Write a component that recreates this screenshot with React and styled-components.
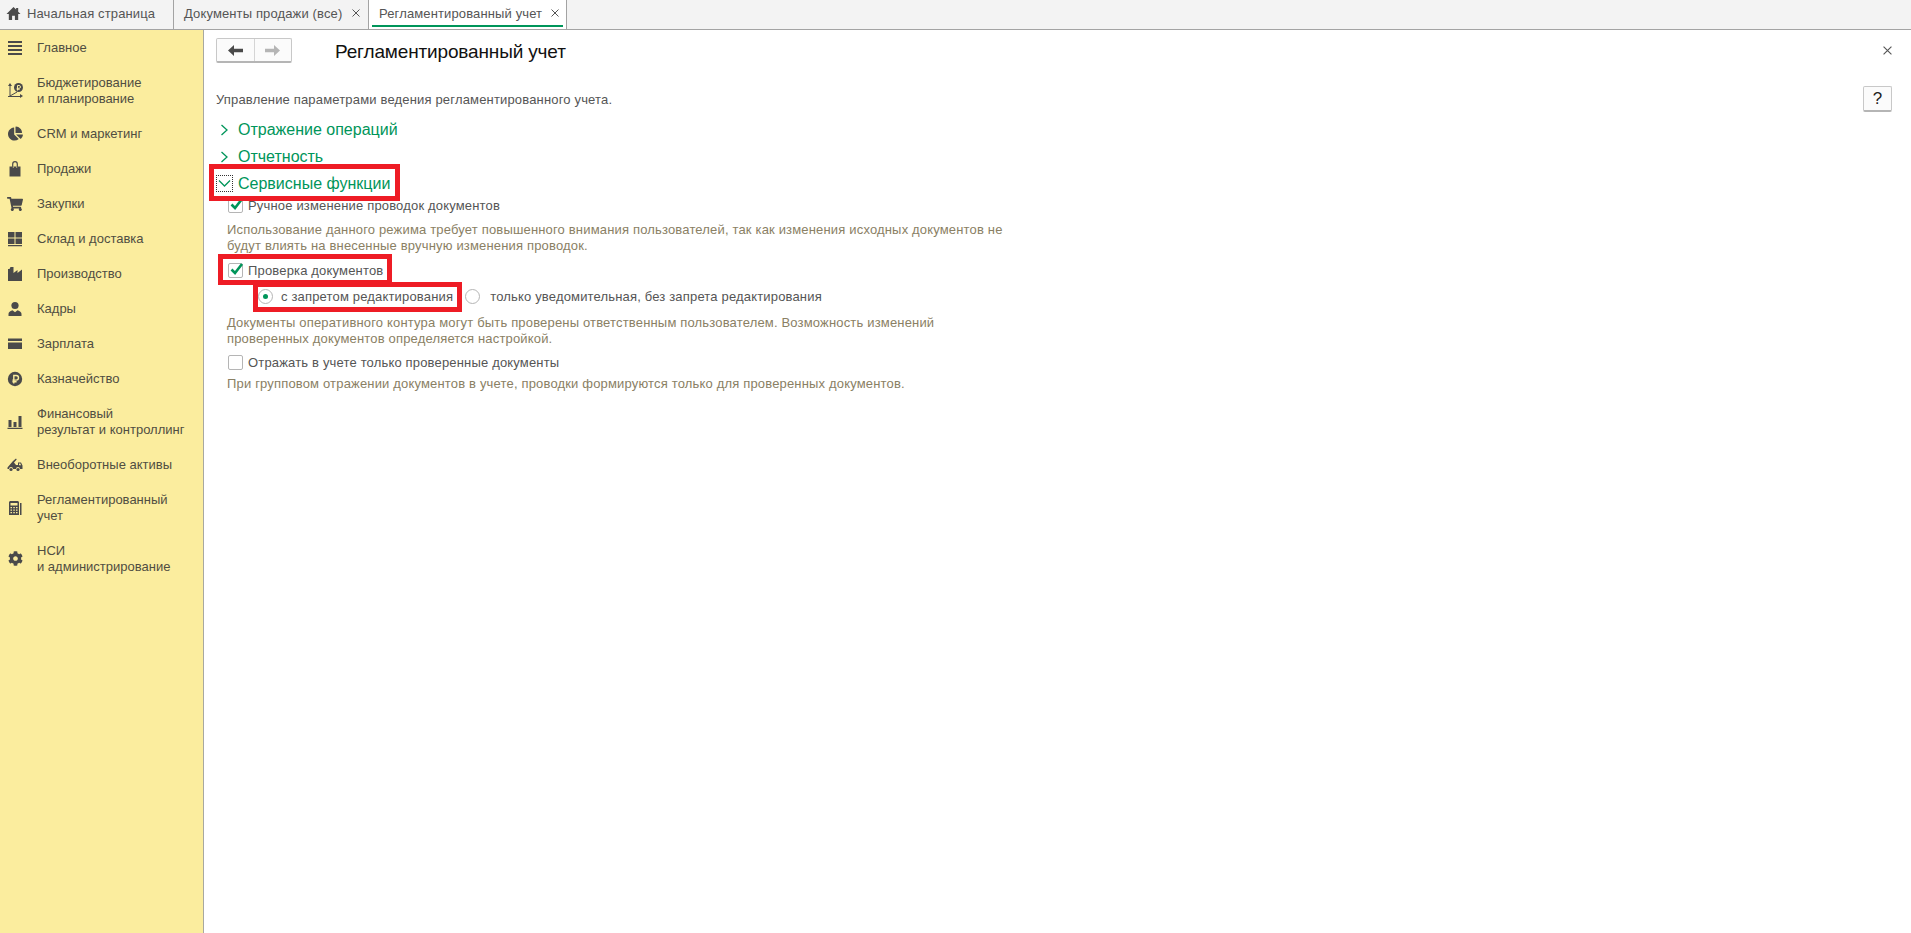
import React from "react";
import styled, { createGlobalStyle } from "styled-components";
import { FaChartPie, FaShoppingCart, FaCog } from "react-icons/fa";

const GlobalStyle = createGlobalStyle`
  html, body {
    margin: 0;
    padding: 0;
    background: #fff;
    font-family: "Liberation Sans", Arial, sans-serif;
    font-size: 13px;
    color: #555;
  }
  * { box-sizing: border-box; }
`;

const Page = styled.div`
  position: relative;
  width: 1911px;
  height: 933px;
  display: flex;
  flex-direction: column;
  overflow: hidden;
`;

const TabBar = styled.div`
  height: 30px;
  flex: none;
  display: flex;
  background: #f3f3f3;
  border-bottom: 1px solid #a3a3a3;
  letter-spacing: 0.13px;
`;

const HomeTab = styled.div`
  width: 174px;
  display: flex;
  align-items: center;
  padding: 0 0 3px 6px;
  gap: 6px;
  border-right: 1px solid #a3a3a3;
  svg { color: #4a4a4a; }
`;

const Tab = styled.div`
  position: relative;
  width: ${(p) => p.$width}px;
  display: flex;
  align-items: center;
  justify-content: space-between;
  padding: 0 ${(p) => (p.$active ? 7 : 8)}px 3px 10px;
  background: ${(p) => (p.$active ? "#fff" : "transparent")};
  border-right: 1px solid #a3a3a3;
  &::after {
    content: "";
    display: ${(p) => (p.$active ? "block" : "none")};
    position: absolute;
    left: 3px;
    right: 3px;
    bottom: 2px;
    height: 2px;
    background: #00955a;
  }
`;

const Body = styled.div`
  flex: 1;
  display: flex;
  min-height: 0;
`;

const Sidebar = styled.nav`
  width: 204px;
  flex: none;
  background: #fbed9e;
  border-right: 1px solid #a8a8a0;
`;

const NavItem = styled.div`
  height: ${(p) => (p.$double ? 51 : 35)}px;
  display: flex;
  align-items: center;
  color: #504e42;
  line-height: 16px;
`;

const NavIcon = styled.span`
  width: 37px;
  flex: none;
  display: flex;
  justify-content: center;
  padding-right: 7px;
  color: #4a4a4a;
`;

const NavText = styled.div`
  padding-top: 1px;
`;

const Main = styled.main`
  flex: 1;
  padding: 8px 19px 0 12px;
  letter-spacing: 0.17px;
`;

const Header = styled.div`
  height: 25px;
  display: flex;
  align-items: center;
`;

const NavGroup = styled.div`
  width: 76px;
  height: 25px;
  display: flex;
  border: 1px solid #c8c8c8;
  border-bottom: 2px solid #b5b5b5;
  border-radius: 2px;
  background: #fbfbfb;
`;

const NavButton = styled.div`
  flex: 1;
  display: flex;
  align-items: center;
  justify-content: center;
  & + & { border-left: 1px solid #d5d5d5; }
`;

const Title = styled.h1`
  margin: 2px 0 0 43px;
  font-size: 19px;
  font-weight: normal;
  letter-spacing: -0.15px;
  color: #111;
`;

const CloseMain = styled.div`
  margin-left: auto;
  display: flex;
`;

const IntroRow = styled.div`
  margin-top: 23px;
  height: 26px;
  display: flex;
  align-items: center;
  justify-content: space-between;
`;

const HelpButton = styled.div`
  width: 29px;
  height: 26px;
  display: flex;
  align-items: center;
  justify-content: center;
  border: 1px solid #c8c8c8;
  border-bottom: 2px solid #b5b5b5;
  border-radius: 2px;
  background: #fbfbfb;
  color: #222;
  font-size: 17px;
`;

const Groups = styled.div`
  margin-top: 4px;
  letter-spacing: 0;
`;

const GroupHead = styled.div`
  height: 27px;
  display: flex;
  align-items: center;
  font-size: 16px;
  color: #00955a;
`;

const Chevron = styled.span`
  width: 17px;
  height: 17px;
  margin-right: 5px;
  display: flex;
  align-items: center;
  justify-content: center;
  border: ${(p) => (p.$focus ? "1px dotted #333" : "none")};
`;

const CheckRow = styled.div`
  height: 18px;
  margin: ${(p) => p.$mt}px 0 0 12px;
  display: flex;
  align-items: center;
  gap: 5px;
`;

const CheckBox = styled.span`
  position: relative;
  width: 15px;
  height: 15px;
  flex: none;
  border: 1px solid #b5b5b5;
  border-radius: 2px;
  background: #fff;
  svg {
    position: absolute;
    left: 0;
    top: -3px;
  }
`;

const RadioRow = styled.div`
  height: 18px;
  margin: 8px 0 0 42px;
  display: flex;
  align-items: center;
`;

const Radio = styled.span`
  width: 15px;
  height: 15px;
  flex: none;
  border: 1px solid #b5b5b5;
  border-radius: 50%;
  background: #fff;
  display: flex;
  align-items: center;
  justify-content: center;
  margin-right: ${(p) => p.$gap}px;
  &::after {
    content: "";
    display: ${(p) => (p.$on ? "block" : "none")};
    width: 5px;
    height: 5px;
    border-radius: 50%;
    background: #00955a;
  }
`;

const RadioLabel = styled.span`
  margin-right: ${(p) => p.$gap || 0}px;
`;

const Hint = styled.p`
  margin: ${(p) => p.$mt}px 0 0 11px;
  width: 840px;
  line-height: 16px;
  color: #8a8064;
`;

const Marker = styled.div`
  position: absolute;
  left: ${(p) => p.$x}px;
  top: ${(p) => p.$y}px;
  width: ${(p) => p.$w}px;
  height: ${(p) => p.$h}px;
  border: 5px solid #ee1c25;
`;

const Svg = ({ children, w = 16, h = 16 }) => (
  <svg width={w} height={h} viewBox="0 0 16 16" fill="currentColor">
    {children}
  </svg>
);

const Cross = ({ size, color }) => (
  <svg width={size} height={size} viewBox="0 0 8 8">
    <path d="M0.500 0.500l7 7M7.500 0.500l-7 7" stroke={color} strokeWidth="1" fill="none" />
  </svg>
);

const icons = {
  menu: (
    <Svg>
      <path d="M1 1h14v2H1zM1 5h14v2H1zM1 9h14v2H1zM1 13h14v2H1z" />
    </Svg>
  ),
  budget: (
    <Svg>
      <path d="M3 13V2" stroke="currentColor" strokeWidth="1" fill="none" />
      <path d="M3 0l2 3H1zM16 13l-3 2v-4z" />
      <path d="M1 13.500h13M3 13l7-4" stroke="currentColor" strokeWidth="1" fill="none" />
      <circle cx="11.500" cy="4.500" r="4.500" />
      <path d="M10.500 7.500v-5h1.600a1.300 1.300 0 0 1 0 2.800h-2.400M9.700 6.300h3" stroke="#fbed9e" strokeWidth="1" fill="none" />
    </Svg>
  ),
  crm: <FaChartPie size={15} />,
  sales: (
    <Svg>
      <path d="M2.500 5.500h11V15.500h-11z" />
      <path d="M5.700 7V3a2.300 2.300 0 0 1 4.600 0v4" stroke="currentColor" strokeWidth="1.200" fill="none" />
      <path d="M6.300 5.500v1.300M9.700 5.500v1.300" stroke="#fbed9e" strokeWidth="0.800" />
    </Svg>
  ),
  cart: <FaShoppingCart size={16} />,
  stock: (
    <Svg>
      <path d="M1 1h6.500v5.500H1zM8.500 1H15v5.500H8.500zM1 7.500h6.500V13H1zM8.500 7.500H15V13H8.500zM1 14h14v1.200H1z" />
    </Svg>
  ),
  factory: (
    <Svg>
      <path d="M1 15V3h1.500L3.500 1h3v6l4-3v3l4.500-3.500V15z" />
    </Svg>
  ),
  person: (
    <Svg>
      <circle cx="8" cy="4.500" r="3.600" />
      <path d="M1.500 15v-2.200c0-2 2.500-3.300 4-3.600l2.500 2 2.500-2c1.500.3 4 1.600 4 3.600V15z" />
    </Svg>
  ),
  card: (
    <Svg>
      <path d="M1 2.500h14v2.400H1zM1 6.500h14v6.500H1z" />
    </Svg>
  ),
  ruble: (
    <Svg>
      <circle cx="8" cy="8" r="7.200" />
      <path d="M6.800 12.500v-8h2.400a2.300 2.300 0 0 1 0 4.600H5.400M5.400 10.800h4.200" stroke="#fbed9e" strokeWidth="1.400" fill="none" />
    </Svg>
  ),
  bars: (
    <Svg>
      <path d="M1.500 6h3v7h-3zM6.500 8h3v5h-3zM11.500 2h3v11h-3zM.500 13.800h15V15H.500z" />
    </Svg>
  ),
  truck: (
    <Svg>
      <path d="M.500 10.500L6 4l3-2.500.700 1L7 5.500l2 2.500h2V5.500h3l1.500 3v3.500H13a2 2 0 0 0-4 0H6a2 2 0 0 0-4 0H.500z" />
      <circle cx="4" cy="12.500" r="1.600" />
      <circle cx="11" cy="12.500" r="1.600" />
      <path d="M12 6.500h1.300l.800 1.800H12z" fill="#fbed9e" />
    </Svg>
  ),
  calc: (
    <Svg>
      <path
        fillRule="evenodd"
        d="M2 2.500c0-.800.700-1.500 1.500-1.500h7c.800 0 1.500.700 1.500 1.500V15H2zM3.500 3v2.500h7V3zM3.500 7v1.300H5V7zM6.300 7v1.300h1.500V7zM9 7v1.300h1.500V7zM3.500 9.500v1.300H5V9.500zM6.300 9.500v1.300h1.500V9.500zM9 9.500v1.300h1.500V9.500zM3.500 12v1.300H5V12zM6.300 12v1.300h1.500V12zM9 12v1.300h1.500V12z"
      />
      <path d="M13 3h1.500v12H13z" />
    </Svg>
  ),
  cog: <FaCog size={15} />,
};

const navItems = [
  { icon: "menu", text: ["Главное"] },
  { icon: "budget", text: ["Бюджетирование", "и планирование"] },
  { icon: "crm", text: ["CRM и маркетинг"] },
  { icon: "sales", text: ["Продажи"] },
  { icon: "cart", text: ["Закупки"] },
  { icon: "stock", text: ["Склад и доставка"] },
  { icon: "factory", text: ["Производство"] },
  { icon: "person", text: ["Кадры"] },
  { icon: "card", text: ["Зарплата"] },
  { icon: "ruble", text: ["Казначейство"] },
  { icon: "bars", text: ["Финансовый", "результат и контроллинг"] },
  { icon: "truck", text: ["Внеоборотные активы"] },
  { icon: "calc", text: ["Регламентированный", "учет"] },
  { icon: "cog", text: ["НСИ", "и администрирование"] },
];

const HomeIcon = () => (
  <svg width="15" height="15" viewBox="0 0 16 16" fill="currentColor">
    <path d="M8 1L.500 8.500H3V15h3.500v-4.500h3V15H13V8.500h2.500L13 6V2h-2.200v1.800z" />
  </svg>
);

const Check = () => (
  <svg width="16" height="16" viewBox="0 0 16 16">
    <path d="M2.500 8.500l3.500 3.500 7-9" stroke="#00955a" strokeWidth="2.600" fill="none" />
  </svg>
);

const Arrow = ({ dir, color }) => (
  <svg width="15" height="11" viewBox="0 0 15 11" fill={color}>
    {dir === "left" ? (
      <path d="M0 5.500L6 0v3.800h9v3.400H6V11z" />
    ) : (
      <path d="M15 5.500L9 0v3.800H0v3.400h9V11z" />
    )}
  </svg>
);

const ChevronRight = () => (
  <svg width="9" height="12" viewBox="0 0 9 12">
    <path d="M1.500 1l5.500 5-5.500 5" stroke="#00955a" strokeWidth="1.300" fill="none" />
  </svg>
);

const ChevronDown = () => (
  <svg width="13" height="9" viewBox="0 0 13 9">
    <path d="M1 1.500l5.500 5.500L12 1.500" stroke="#00955a" strokeWidth="1.300" fill="none" />
  </svg>
);

export default function App() {
  return (
    <Page>
      <GlobalStyle />
      <TabBar>
        <HomeTab>
          <HomeIcon />
          <span>Начальная страница</span>
        </HomeTab>
        <Tab $width={195}>
          <span>Документы продажи (все)</span>
          <Cross size={8} color="#555" />
        </Tab>
        <Tab $width={198} $active>
          <span>Регламентированный учет</span>
          <Cross size={8} color="#555" />
        </Tab>
      </TabBar>
      <Body>
        <Sidebar>
          {navItems.map((item) => (
            <NavItem key={item.icon} $double={item.text.length > 1}>
              <NavIcon>{icons[item.icon]}</NavIcon>
              <NavText>
                {item.text.map((line) => (
                  <div key={line}>{line}</div>
                ))}
              </NavText>
            </NavItem>
          ))}
        </Sidebar>
        <Main>
          <Header>
            <NavGroup>
              <NavButton>
                <Arrow dir="left" color="#4a4a4a" />
              </NavButton>
              <NavButton>
                <Arrow dir="right" color="#b5b5b5" />
              </NavButton>
            </NavGroup>
            <Title>Регламентированный учет</Title>
            <CloseMain>
              <Cross size={9} color="#555" />
            </CloseMain>
          </Header>
          <IntroRow>
            <span>Управление параметрами ведения регламентированного учета.</span>
            <HelpButton>?</HelpButton>
          </IntroRow>
          <Groups>
            <GroupHead>
              <Chevron>
                <ChevronRight />
              </Chevron>
              Отражение операций
            </GroupHead>
            <GroupHead>
              <Chevron>
                <ChevronRight />
              </Chevron>
              Отчетность
            </GroupHead>
            <GroupHead>
              <Chevron $focus>
                <ChevronDown />
              </Chevron>
              Сервисные функции
            </GroupHead>
          </Groups>
          <CheckRow $mt={-1}>
            <CheckBox>
              <Check />
            </CheckBox>
            Ручное изменение проводок документов
          </CheckRow>
          <Hint $mt={8}>
            Использование данного режима требует повышенного внимания пользователей, так как изменения исходных документов не
            <br />
            будут влиять на внесенные вручную изменения проводок.
          </Hint>
          <CheckRow $mt={7}>
            <CheckBox>
              <Check />
            </CheckBox>
            Проверка документов
          </CheckRow>
          <RadioRow>
            <Radio $on $gap={8} />
            <RadioLabel $gap={12}>с запретом редактирования</RadioLabel>
            <Radio $gap={10} />
            <RadioLabel>только уведомительная, без запрета редактирования</RadioLabel>
          </RadioRow>
          <Hint $mt={10}>
            Документы оперативного контура могут быть проверены ответственным пользователем. Возможность изменений
            <br />
            проверенных документов определяется настройкой.
          </Hint>
          <CheckRow $mt={6}>
            <CheckBox />
            Отражать в учете только проверенные документы
          </CheckRow>
          <Hint $mt={5}>
            При групповом отражении документов в учете, проводки формируются только для проверенных документов.
          </Hint>
        </Main>
      </Body>
      <Marker $x={209} $y={164} $w={191} $h={37} />
      <Marker $x={218} $y={254} $w={174} $h={31} />
      <Marker $x={253} $y={282} $w={209} $h={30} />
    </Page>
  );
}
